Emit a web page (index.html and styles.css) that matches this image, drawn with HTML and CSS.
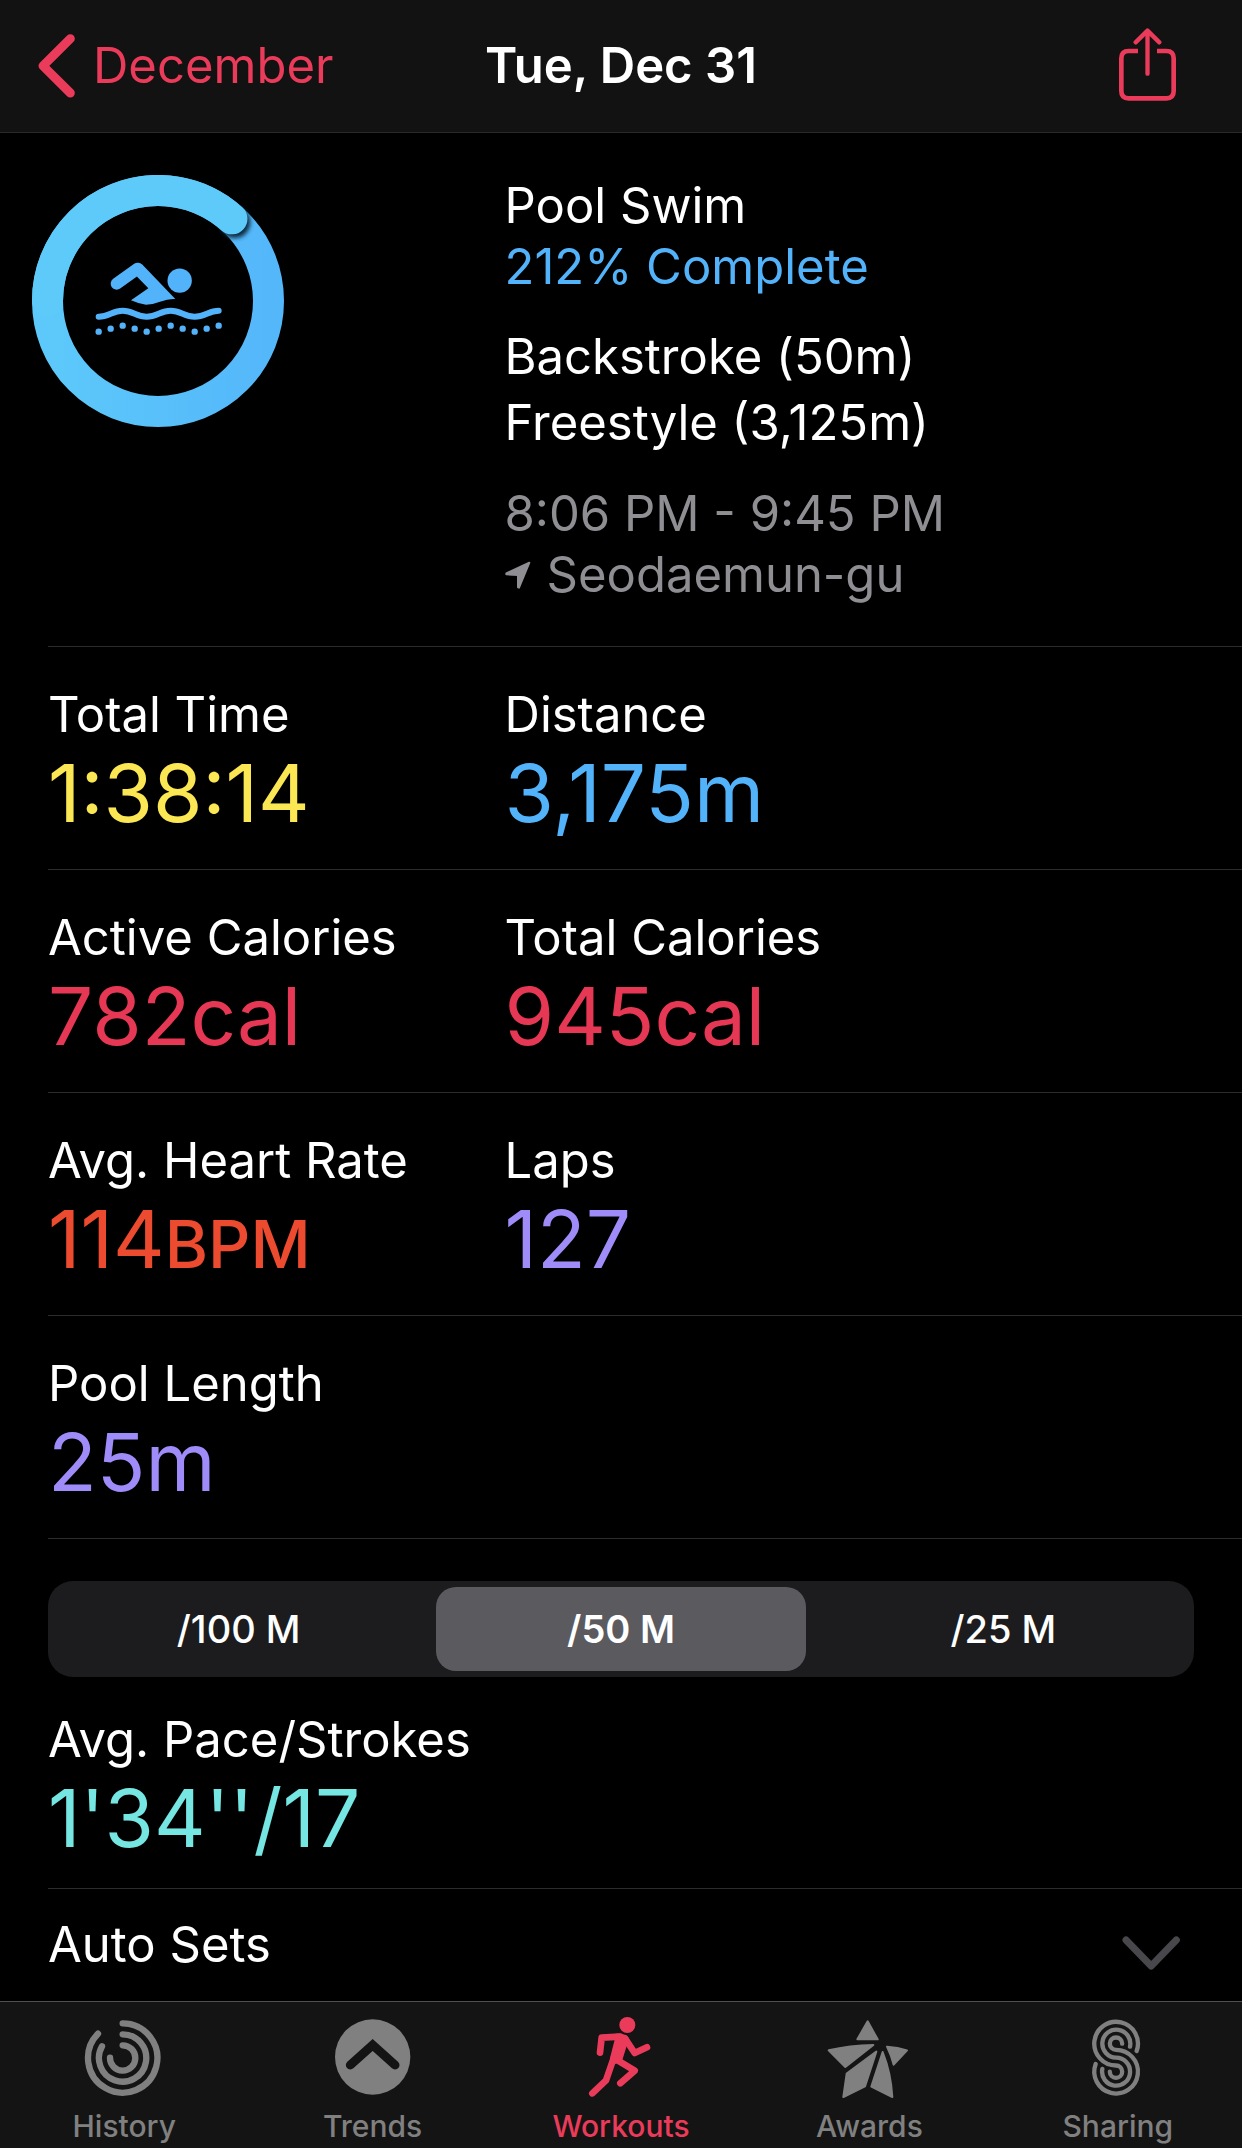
FILE: index.html
```html
<!DOCTYPE html>
<html lang="en">
<head>
    <meta charset="UTF-8">
    <meta name="viewport" content="width=device-width, initial-scale=1.0">
    <title>Workout - Tue, Dec 31</title>
    <link rel="stylesheet" href="styles.css">
</head>
<body>
    <header class="nav-bar">
        <a href="#" class="back-link">
            <svg class="back-icon" viewBox="112 104 114 192" aria-hidden="true">
                <path d="M212 118L130 199.500L212 281"/>
            </svg>
            December
        </a>
        <h1>Tue, Dec 31</h1>
        <button class="share-button" aria-label="Share">
            <svg class="share-icon" viewBox="117 82 171 219" aria-hidden="true">
                <path d="M174 151H146Q124 151 124 173V271Q124 293 146 293H259Q281 293 281 271V173Q281 151 259 151H231"/>
                <path class="arrow" d="M202.500 219V92M167 125L202.500 90L238 125"/>
            </svg>
        </button>
    </header>

    <main>
        <section class="row summary">
            <svg class="ring" viewBox="94 526 756 756" role="img" aria-label="Pool swim, 212% of goal">
                <defs>
                    <linearGradient id="ringBase" x1="0" y1="0" x2="1" y2="0">
                        <stop offset="0" stop-color="#5dc9fa"/>
                        <stop offset="1" stop-color="#54b7fa"/>
                    </linearGradient>
                    <filter id="capShadow" x="-50%" y="-50%" width="200%" height="200%">
                        <feGaussianBlur stdDeviation="7"/>
                    </filter>
                </defs>
                <circle cx="472" cy="904" r="331.500" fill="none" stroke="url(#ringBase)" stroke-width="93"/>
                <circle cx="702" cy="668" r="47" fill="#0a2b40" filter="url(#capShadow)"/>
                <path d="M140.500 904A331.500 331.500 0 0 1 693.800 657.600" fill="none" stroke="#5dcafa" stroke-width="93" stroke-linecap="round"/>
                <g class="swimmer">
                    <circle cx="537" cy="843" r="36.500"/>
                    <path class="arm" d="M348 852L411 807"/>
                    <path d="M424 794L524 898Q505 896 478 906Q455 915 436 915Q415 913 391 902L443 866L410 832L398 806Z"/>
                    <path class="wave" d="M294 951C325 951 335 933 366 933S407 951 438 951S479 933 510 933S551 951 582 951S624 933 654 933"/>
                    <circle cx="294" cy="996" r="9.500"/>
                    <circle cx="330" cy="987" r="9.500"/>
                    <circle cx="366" cy="978" r="9.500"/>
                    <circle cx="402" cy="987" r="9.500"/>
                    <circle cx="438" cy="996" r="9.500"/>
                    <circle cx="474" cy="987" r="9.500"/>
                    <circle cx="510" cy="978" r="9.500"/>
                    <circle cx="546" cy="987" r="9.500"/>
                    <circle cx="582" cy="996" r="9.500"/>
                    <circle cx="618" cy="987" r="9.500"/>
                    <circle cx="654" cy="978" r="9.500"/>
                </g>
            </svg>
            <div class="details">
                <div>
                    <p>Pool Swim</p>
                    <p class="blue">212% Complete</p>
                </div>
                <div class="strokes">
                    <p>Backstroke (50m)</p>
                    <p>Freestyle (3,125m)</p>
                </div>
                <div class="muted">
                    <p>8:06 PM - 9:45 PM</p>
                    <p class="location">
                        <svg class="location-icon" viewBox="78 1210 76 84" aria-hidden="true">
                            <path d="M150 1215L119 1290L116 1289V1252L81 1250V1247Z"/>
                        </svg>
                        Seodaemun-gu
                    </p>
                </div>
            </div>
        </section>

        <section class="row">
            <div>
                <h2>Total Time</h2>
                <p class="value yellow">1:38:14</p>
            </div>
            <div>
                <h2>Distance</h2>
                <p class="value blue">3,175m</p>
            </div>
        </section>

        <section class="row">
            <div>
                <h2>Active Calories</h2>
                <p class="value pink">782cal</p>
            </div>
            <div>
                <h2>Total Calories</h2>
                <p class="value pink">945cal</p>
            </div>
        </section>

        <section class="row">
            <div>
                <h2>Avg. Heart Rate</h2>
                <p class="value orange">114<span class="unit">BPM</span></p>
            </div>
            <div>
                <h2>Laps</h2>
                <p class="value purple">127</p>
            </div>
        </section>

        <section class="row">
            <div>
                <h2>Pool Length</h2>
                <p class="value purple">25m</p>
            </div>
        </section>

        <section class="pace">
            <div class="segmented">
                <button>/100 M</button>
                <button class="active">/50 M</button>
                <button>/25 M</button>
            </div>
            <h2>Avg. Pace/Strokes</h2>
            <p class="value teal">1'34''/17</p>
        </section>

        <button class="auto-sets">
            Auto Sets
            <svg class="expand-icon" viewBox="247 112 174 102" aria-hidden="true">
                <path d="M259 124L334.500 202L410 124"/>
            </svg>
        </button>
    </main>

    <nav class="tab-bar">
        <a href="#">
            <svg viewBox="244 76 258 258" aria-hidden="true">
                <g class="line" stroke-width="19">
                    <path d="M369 101A104 104 0 1 1 295 132"/>
                    <path d="M369 134A71 71 0 1 1 307 170"/>
                    <path d="M369 167A38 38 0 1 1 331 204"/>
                </g>
            </svg>
            History
        </a>
        <a href="#">
            <svg viewBox="989 76 258 258" aria-hidden="true">
                <circle cx="1117" cy="202" r="113"/>
                <path d="M1050 226L1117 166L1184 226" fill="none" stroke="#141414" stroke-width="27" stroke-linecap="round"/>
            </svg>
            Trends
        </a>
        <a href="#" class="active">
            <svg viewBox="114 76 258 258" aria-hidden="true">
                <circle cx="262" cy="106" r="24"/>
                <path d="M226 132Q252 129 267 145L258 176L246 214L214 228L210 205L224 150Z"/>
                <g class="line" stroke-width="20">
                    <path d="M180 189L185 144L240 141"/>
                    <path d="M255 146L284 190L321 173"/>
                    <path d="M221 205L198 272L157 311"/>
                    <path d="M233 212L284 243L241 281"/>
                </g>
            </svg>
            Workouts
        </a>
        <a href="#">
            <svg viewBox="859 76 258 258" aria-hidden="true">
                <g stroke="currentColor" stroke-width="6" stroke-linejoin="round">
                    <path d="M984 95L1014 149H953Z"/>
                    <path d="M867 182Q930 167 1001 166L917 232Z"/>
                    <path d="M1010 186L976 290L911 322L921 252Z"/>
                    <path d="M1029 187Q1054 250 1058 322L995 291Z"/>
                    <path d="M1042 171Q1075 173 1102 182L1062 225Q1056 200 1042 171Z"/>
                </g>
            </svg>
            Awards
        </a>
        <a href="#">
            <svg viewBox="104 346 258 258" aria-hidden="true">
                <g class="line" stroke-width="13">
                    <path d="M289 454A65.500 65.500 0 1 0 227 497.500A18.500 18.500 0 1 1 208.500 516"/>
                    <path d="M269 441A42 42 0 1 0 227 474A42 42 0 1 1 186 508"/>
                    <path d="M245.500 432A18.500 18.500 0 1 0 227 450.500A65.500 65.500 0 1 1 166 493"/>
                </g>
            </svg>
            Sharing
        </a>
    </nav>
</body>
</html>
```

FILE: styles.css
```css
* {
    box-sizing: border-box;
}

body {
    font-family: Inter, "Liberation Sans", sans-serif;
    font-size: 49px;
    line-height: 60px;
    background-color: #000;
    color: #fff;
    margin: 0;
    min-height: 100vh;
    display: flex;
    flex-direction: column;
}

h1, h2, p {
    margin: 0;
    font-size: inherit;
    font-weight: 400;
}

a {
    color: inherit;
    text-decoration: none;
}

button {
    font: inherit;
    color: inherit;
    background: none;
    border: none;
    padding: 0;
    cursor: pointer;
}

svg {
    display: block;
}

main {
    flex: 1;
}

/* Top bar */
.nav-bar {
    display: grid;
    grid-template-columns: 1fr auto 1fr;
    align-items: center;
    height: 133px;
    padding: 0 37px;
    background-color: #121212;
    border-bottom: 1px solid #2a2a2a;
}

.nav-bar h1 {
    font-weight: 600;
}

.back-link {
    display: flex;
    align-items: center;
    gap: 18px;
    color: #eb3b5a;
}

.back-icon {
    width: 38px;
    height: 64px;
    fill: none;
    stroke: #eb3b5a;
    stroke-width: 27;
    stroke-linecap: round;
    stroke-linejoin: round;
}

.share-button {
    justify-self: end;
    padding: 0 29px 4px 0;
}

.share-icon {
    width: 57px;
    height: 73px;
    fill: none;
    stroke: #eb3b5a;
    stroke-width: 14;
}

.share-icon .arrow {
    stroke-width: 13;
    stroke-linecap: round;
    stroke-linejoin: round;
}

/* Rows */
.row {
    display: grid;
    grid-template-columns: 13fr 21fr;
    margin-left: 48px;
    padding: 38px 0 28px;
    border-bottom: 1px solid #2c2c2e;
}

.summary {
    padding: 42px 0 41px;
}

.ring {
    width: 252px;
    height: 252px;
    margin-left: -16px;
}

.swimmer {
    fill: #53b3fa;
}

.swimmer .arm,
.swimmer .wave {
    fill: none;
    stroke: #53b3fa;
    stroke-linecap: round;
}

.swimmer .arm {
    stroke-width: 36;
}

.swimmer .wave {
    stroke-width: 18;
}

.details {
    display: flex;
    flex-direction: column;
    gap: 27px;
    line-height: 61px;
}

.strokes {
    line-height: 66px;
}

.location {
    display: flex;
    align-items: center;
    gap: 16px;
}

.location-icon {
    width: 26px;
    height: 28px;
    fill: #8e8e93;
    stroke: #8e8e93;
    stroke-width: 6;
    stroke-linejoin: round;
}

.value {
    font-size: 80px;
    line-height: 96px;
}

.unit {
    font-size: 66px;
    font-weight: 500;
    line-height: 1;
}

.muted { color: #8e8e93; }
.blue { color: #53b3fa; }
.yellow { color: #fbe654; }
.pink { color: #e63755; }
.orange { color: #ec4b2f; }
.purple { color: #9f8cf8; }
.teal { color: #76e6e3; }

/* Pace */
.pace {
    margin-left: 48px;
    padding: 42px 0 22px;
    border-bottom: 1px solid #2c2c2e;
}

.segmented {
    display: grid;
    grid-template-columns: repeat(3, 1fr);
    gap: 13px;
    height: 96px;
    margin: 0 48px 33px 0;
    padding: 6px;
    background-color: #1c1c1f;
    border-radius: 25px;
}

.segmented button {
    font-size: 38px;
    font-weight: 500;
    border-radius: 20px;
}

.segmented .active {
    font-weight: 600;
    background-color: #5b5a5f;
}

.auto-sets {
    display: flex;
    justify-content: space-between;
    align-items: center;
    width: 100%;
    padding: 26px 62px 25px 48px;
}

.expand-icon {
    width: 58px;
    height: 34px;
    margin-top: 16px;
    fill: none;
    stroke: #48484c;
    stroke-width: 21;
    stroke-linecap: round;
    stroke-linejoin: round;
}

/* Bottom tabs */
.tab-bar {
    position: sticky;
    bottom: 0;
    display: grid;
    grid-template-columns: repeat(5, 1fr);
    padding: 13px 0 5px;
    background-color: #141414;
    border-top: 1px solid #505050;
}

.tab-bar a {
    display: flex;
    flex-direction: column;
    align-items: center;
    gap: 8px;
    font-size: 30px;
    line-height: 34px;
    font-weight: 500;
    color: #808080;
}

.tab-bar .active {
    color: #eb3b5a;
}

.tab-bar svg {
    width: 86px;
    height: 86px;
    fill: currentColor;
}

.tab-bar .line {
    fill: none;
    stroke: currentColor;
    stroke-linecap: round;
    stroke-linejoin: round;
}
```
